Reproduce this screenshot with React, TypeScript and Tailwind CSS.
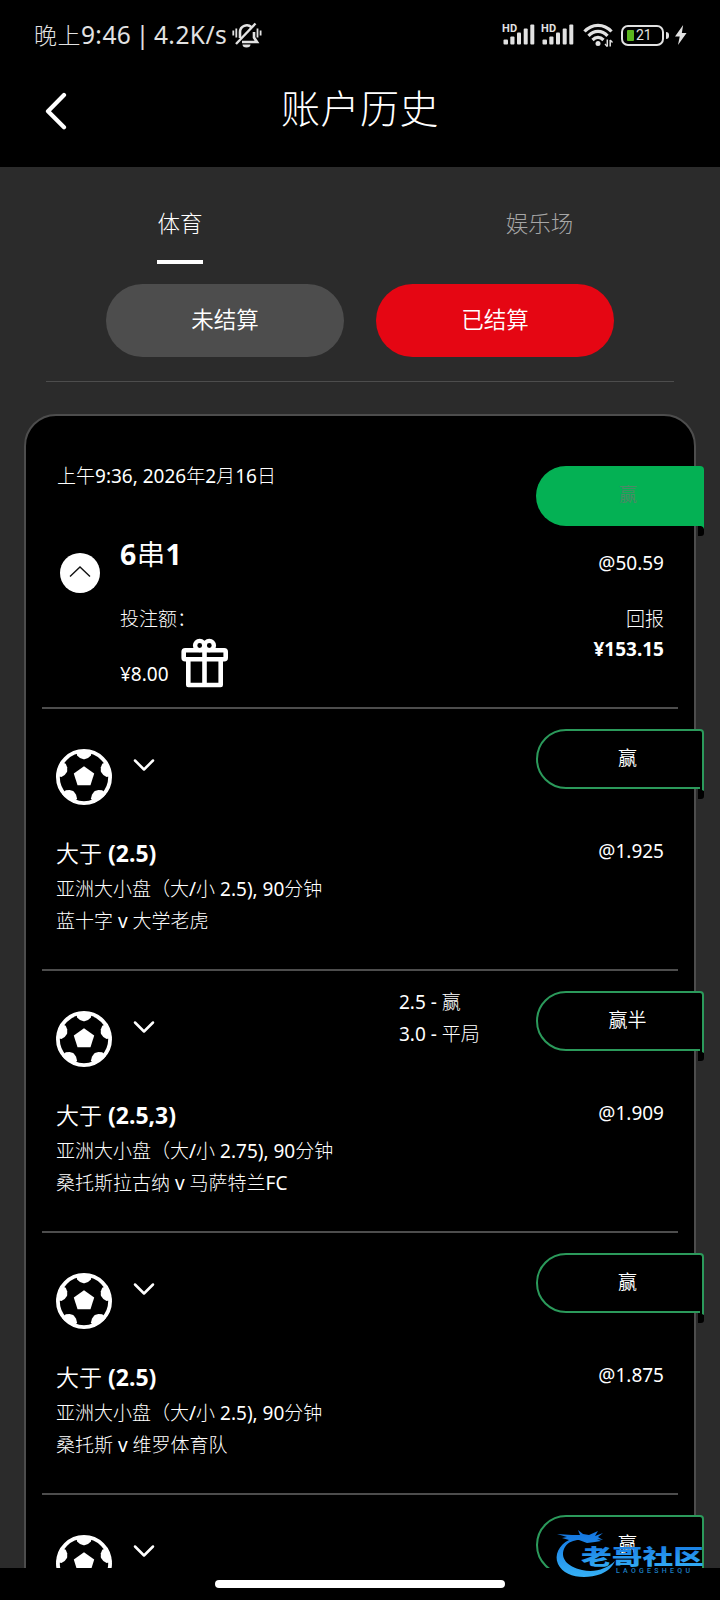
import React from 'react';

const CJK = /([\u3000-\u9fff\uff00-\uffef]+)/;

/* Chinese runs are set in a lighter face than the Latin text around them. */
function Mixed({ text, cjk = 'font-light' }: { text: string; cjk?: string }) {
  return (
    <>
      {text.split(CJK).map((part, i) =>
        CJK.test(part) ? (
          <span key={i} className={cjk}>
            {part}
          </span>
        ) : (
          part
        ),
      )}
    </>
  );
}

function Signal() {
  return (
    <div className="relative h-[26px] w-[39px]">
      <span className="absolute left-0 top-[2px] font-['Roboto'] text-[11px] font-bold leading-[10px] tracking-[0.2px]">HD</span>
      <svg className="block" width="39" height="26" viewBox="0 0 39 26" fill="currentColor">
        <rect x="1.5" y="17.5" width="4.5" height="5" rx="1" />
        <rect x="8.3" y="14.5" width="4.2" height="8" rx="1" />
        <rect x="15" y="10.500" width="4" height="12" rx="1" />
        <rect x="21.7" y="6.500" width="4" height="16" rx="1" />
        <rect x="28.3" y="2.5" width="4" height="20" rx="1" />
      </svg>
    </div>
  );
}

function StatusBar() {
  return (
    <div className="flex h-[70px] items-center justify-between pl-[34px] pr-[33px] text-[#e2e2e2]">
      <div className="flex items-center">
        <span className="whitespace-nowrap font-['Noto_Sans','Noto_Sans_CJK_SC',sans-serif] text-[24.5px] leading-[30px] tracking-[0.45px] [word-spacing:-2.5px]">
          <Mixed text="晚上9:46 | 4.2K/s" cjk="font-light text-[23px]" />
        </span>
        <svg className="ml-[5px]" width="30" height="28" viewBox="0 0 30 28" fill="none" stroke="currentColor" strokeWidth="2.6">
          <path d="M8 17V11a6.8 6.8 0 0 1 11.5-4.8M22 11v5.500l3 4.500H10" />
          <path d="M4 23 23.500 2.500" strokeWidth="2.4" />
          <path d="M1.300 9.500v5M4.300 7.500v9M25.500 7.500v9M28.600 9.500v5" strokeWidth="1.800" />
          <path d="M10.500 23.500h8a4 3 0 0 1-8 0Z" fill="currentColor" stroke="none" />
        </svg>
      </div>
      <div className="flex items-center">
        <Signal />
        <Signal />
        <svg className="ml-[2px]" width="32" height="26" viewBox="0 0 32 26" fill="none" stroke="currentColor" strokeWidth="3.200">
          <path d="M2.500 9.500C10 1.200 22 1.200 29.500 9.500" />
          <path d="M6.500 13.800c5.500-5.800 13.500-5.800 19 0" />
          <path d="M10.500 18c3.400-3.400 7.600-3.400 11 0" />
          <circle cx="16" cy="21.500" r="2.500" fill="currentColor" stroke="none" />
          <path d="M25.300 17.500v7M28.200 24.500V18" strokeWidth="1.500" />
          <path d="m23 22 2.300 2.500M28.200 18l2.300 2.500" strokeWidth="1.300" />
        </svg>
        <div className="relative ml-[7px] h-[21px] w-[43px] rounded-[7px] border-[2.5px] border-[#e2e2e2]">
          <div className="absolute left-[4px] top-[3px] h-[11px] w-[7px] rounded-[1px] bg-[#5bb51e]" />
          <span className="absolute left-[13px] top-px font-['Roboto'] text-[14px] leading-[15px]">21</span>
        </div>
        <div className="ml-[2px] h-[7px] w-[3px] rounded-r bg-[#e2e2e2]" />
        <svg className="ml-[6px]" width="12" height="20" viewBox="0 0 14 20" preserveAspectRatio="none" fill="currentColor">
          <path d="M9.500 0 0 11.500h5.500L3.500 20 13.500 8H8Z" />
        </svg>
      </div>
    </div>
  );
}

function Header() {
  return (
    <header className="h-[167px] bg-black">
      <StatusBar />
      <div className="grid h-[80px] grid-cols-3 items-center">
        <svg className="ml-[44px] block" width="24" height="40" viewBox="0 0 24 40" fill="none" stroke="#fff" strokeWidth="4.200" strokeLinecap="round" strokeLinejoin="round">
          <path d="M20 5 4 21.200 20 37.200" />
        </svg>
        <h1 className="whitespace-nowrap pb-[4px] text-center text-[39px] font-light leading-[50px] tracking-[0.5px]">账户历史</h1>
      </div>
    </header>
  );
}

function Ball() {
  return (
    <svg className="block" width="56" height="56" viewBox="0 0 56 56">
      <clipPath id="ball">
        <circle cx="28" cy="28" r="28" />
      </clipPath>
      <circle cx="28" cy="28" r="26.100" fill="none" stroke="#fff" strokeWidth="3.800" />
      <path d="M28 17.300 38.200 24.600 34.500 36.300H21.500L17.800 24.600Z" fill="#fff" />
      <g fill="#fff" clipPath="url(#ball)">
        {[0, 72, 144, 216, 288].map((a) => (
          <path key={a} d="M20.500 1H35.500L35 6.500 32 9 28.500 10.200H27.500L24 9 21 6.500Z" transform={`rotate(${a} 28 28)`} />
        ))}
      </g>
    </svg>
  );
}

function Badge({ label, solid = false }: { label: string; solid?: boolean }) {
  return (
    <div className="absolute right-[-10px] top-0 w-[168px]">
      {solid ? (
        <div className="flex h-[60px] items-center justify-center rounded-l-[30px] rounded-tr-[4px] bg-[#04b154] pb-[3px] pl-[16px] text-[18px] font-normal text-[#4a8a66]">
          {label}
        </div>
      ) : (
        <div className="flex h-[60px] items-center justify-center rounded-l-[30px] rounded-tr-[4px] border-2 border-[#2b9a5b] bg-black pb-[3px] pl-[15px] text-[19px] font-[350] leading-[24px]">
          {label}
        </div>
      )}
      <svg className="absolute right-0 top-[58px] block" width="6" height="12" viewBox="0 0 6 12">
        <path d={solid ? 'M0 2H6V9Q6 12 3 12H0Z' : 'M2 0H4V2H6V9Q6 12 3 12H0V2H2Z'} fill="#000" />
        <path d={solid ? 'M3 1H6V5Q5.500 2.500 3 2Z' : 'M4 0H6V4L4 3Z'} fill={solid ? '#04b154' : '#2b9a5b'} />
      </svg>
    </div>
  );
}

type Leg = { result: string; notes?: string[]; detail?: { pick: string; market: string; match: string; odds: string } };

const legs: Leg[] = [
  { result: '赢', detail: { pick: '大于 (2.5)', market: '亚洲大小盘（大/小 2.5), 90分钟', match: '蓝十字 v 大学老虎', odds: '@1.925' } },
  {
    result: '赢半',
    notes: ['2.5 - 赢', '3.0 - 平局'],
    detail: { pick: '大于 (2.5,3)', market: '亚洲大小盘（大/小 2.75), 90分钟', match: '桑托斯拉古纳 v 马萨特兰FC', odds: '@1.909' },
  },
  { result: '赢', detail: { pick: '大于 (2.5)', market: '亚洲大小盘（大/小 2.5), 90分钟', match: '桑托斯 v 维罗体育队', odds: '@1.875' } },
  { result: '赢' },
];

function LegRow({ leg }: { leg: Leg }) {
  return (
    <div className="relative h-[262px]">
      <div className="absolute right-0 top-[20px]">
        <Badge label={leg.result} />
      </div>
      <div className="flex h-[112px] pl-[30px]">
        <div className="pt-[40px]">
          <Ball />
        </div>
        <svg className="ml-[20px] mt-[48px] block" width="24" height="16" viewBox="0 0 24 16" fill="none" stroke="#fff" strokeWidth="2.500" strokeLinecap="round" strokeLinejoin="round">
          <path d="m3 3.500 9 9 9-9" />
        </svg>
        {leg.notes && (
          <div className="ml-[243px] pt-[15px] text-[19px] leading-8">
            {leg.notes.map((n) => (
              <div key={n} className="whitespace-nowrap">
                <Mixed text={n} />
              </div>
            ))}
          </div>
        )}
      </div>
      {leg.detail && (
        <div className="flex justify-between pl-[30px] pr-[30px]">
          <div className="whitespace-nowrap pt-[15px]">
            <div className="text-[23px] font-bold leading-[34px]">
              <Mixed text={leg.detail.pick} cjk="font-[350]" />
            </div>
            <div className="mt-[3px] text-[19px] leading-8">
              <Mixed text={leg.detail.market} />
            </div>
            <div className="text-[19px] leading-8">
              <Mixed text={leg.detail.match} />
            </div>
          </div>
          <div className="pt-[14px] text-[19px] leading-8">{leg.detail.odds}</div>
        </div>
      )}
      <div className="absolute bottom-0 left-4 right-4 h-[2px] bg-[#4d4d4d]" />
    </div>
  );
}

function Summary() {
  return (
    <div className="relative h-[293px] pt-[44px]">
      <div className="absolute right-0 top-[50px]">
        <Badge label="赢" solid />
      </div>
      <div className="h-8 pl-[31px] text-[19px] leading-8">
        <Mixed text="上午9:36, 2026年2月16日" />
      </div>
      <div className="flex pl-[34px] pr-[30px]">
        <svg className="mt-[61px] block" width="40" height="40" viewBox="0 0 40 40">
          <circle cx="20" cy="20" r="20" fill="#fff" />
          <path d="m10 23.500 10-9.500 10 9.500" fill="none" stroke="#111" strokeWidth="1.400" />
        </svg>
        <div className="ml-[20px] pt-[42px]">
          <div className="text-[28.5px] font-bold leading-10 tracking-[0.4px]">
            <Mixed text="6串1" cjk="font-[350]" />
          </div>
          <div className="mt-[29px] text-[19px] font-light leading-8">投注额：</div>
          <div className="flex">
            <div className="pt-[23px] text-[19px] leading-8">¥8.00</div>
            <svg className="ml-[12px] mt-[3px] block" width="48" height="50" viewBox="0 0 48 50" fill="none" stroke="#fff" strokeWidth="4.600" strokeLinejoin="round">
              <rect x="2.700" y="12.300" width="42" height="9" rx="1.500" />
              <path d="M7.300 21.300V47H39.700V21.300M23.500 12.300V47" />
              <circle cx="18.700" cy="7.500" r="4.600" strokeWidth="4.400" />
              <circle cx="28.300" cy="7.500" r="4.600" strokeWidth="4.400" />
            </svg>
          </div>
        </div>
        <div className="ml-auto pt-[55px] text-right text-[19px] leading-8">
          <div>@50.59</div>
          <div className="mt-[24px] font-light">回报</div>
          <div className="-mt-[2px] font-bold">¥153.15</div>
        </div>
      </div>
      <div className="absolute bottom-0 left-4 right-4 h-[2px] bg-[#4d4d4d]" />
    </div>
  );
}

function Watermark() {
  return (
    <svg className="absolute left-[550px] top-[1526px]" width="156" height="54" viewBox="0 0 156 54">
      <defs>
        <linearGradient id="wm" x1="0" y1="0" x2="0" y2="1">
          <stop offset="0" stopColor="#1272e0" />
          <stop offset="1" stopColor="#35b0f5" />
        </linearGradient>
      </defs>
      <path
        d="M19 14C9 19 4 29 8 38c6 13 26 16 43 10 7-3 11-7 14-13-9 8-20 12-33 9C17 41 9 31 15 21c3-5 9-7 14-7l8 3 8-1 6-1-4-2 6 1-5-3 5-4-8 3 3-5-9 4-6-1-5-4 2 5-8 0-15-1 10 3-5 1Z"
        fill="url(#wm)"
      />
      <text x="31" y="37.500" fontFamily="'Noto Sans CJK SC', sans-serif" fontWeight="900" fontSize="21" fill="url(#wm)" textLength="123" lengthAdjust="spacingAndGlyphs">
        老哥社区
      </text>
      <text x="66" y="46.500" fontFamily="Roboto, sans-serif" fontSize="7" fontWeight="500" fill="#1c7fc4" textLength="74">
        LAOGESHEQU
      </text>
    </svg>
  );
}

export default function App() {
  return (
    <div className="relative flex h-[1600px] w-[720px] flex-col overflow-hidden bg-black font-['Noto_Sans','Noto_Sans_CJK_SC',sans-serif] text-white">
      <Header />
      <main className="h-[1401px] overflow-hidden bg-[#2b2b2b]">
        <div className="grid h-[97px] grid-cols-2 text-[22.5px] font-light">
          <div className="flex flex-col items-center pt-[40px]">
            <span className="leading-[34px]">体育</span>
            <div className="mt-[19px] h-[4px] w-[46px] bg-white" />
          </div>
          <div className="pr-px pt-[40px] text-center leading-[34px] text-[#a6a6a6]">娱乐场</div>
        </div>
        <div className="mt-[20px] flex justify-center gap-8 text-[22.5px] font-[350]">
          <div className="flex h-[73px] w-[238px] items-center justify-center rounded-full bg-[#4d4d4d] pb-[2px]">未结算</div>
          <div className="flex h-[73px] w-[238px] items-center justify-center rounded-full bg-[#e50613] pb-[2px]">已结算</div>
        </div>
        <div className="mx-[46px] mt-[24px] h-px bg-[#4d4d4d]" />
        <section className="mx-6 mt-[32px] h-[1400px] rounded-t-[32px] border-2 border-[#4d4d4d] bg-black">
          <Summary />
          {legs.map((leg, i) => (
            <LegRow key={i} leg={leg} />
          ))}
        </section>
      </main>
      <div className="mx-auto mt-3 h-2 w-[290px] rounded-full bg-white" />
      <Watermark />
    </div>
  );
}
